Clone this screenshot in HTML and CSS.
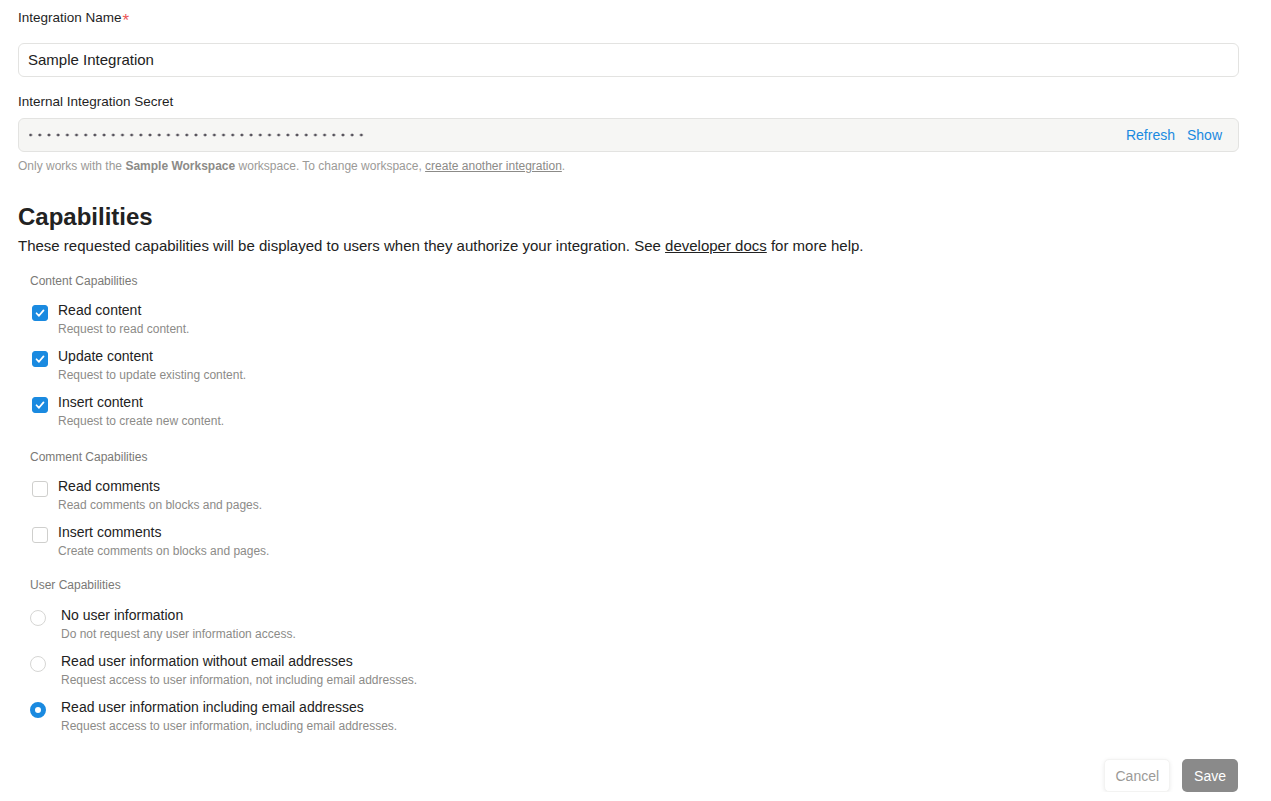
FILE: index.html
```html
<!DOCTYPE html>
<html lang="en">
<head>
<meta charset="utf-8">
<title>Integration settings</title>
<link rel="stylesheet" href="styles.css">
</head>
<body>
<main class="page">
  <section class="field">
    <label class="field-label">Integration Name<span class="req">*</span></label>
    <div class="input">Sample Integration</div>
  </section>

  <section class="field secret-field">
    <label class="field-label">Internal Integration Secret</label>
    <div class="input secret">
      <span class="mask" aria-label="hidden secret"></span>
      <span class="secret-actions">
        <a class="action">Refresh</a>
        <a class="action">Show</a>
      </span>
    </div>
    <p class="hint">Only works with the <b>Sample Workspace</b> workspace. To change workspace, <a class="hint-link">create another integration</a>.</p>
  </section>

  <section class="caps">
    <h2 class="caps-title">Capabilities</h2>
    <p class="caps-desc">These requested capabilities will be displayed to users when they authorize your integration. See <a class="doc-link">developer docs</a> for more help.</p>

    <div class="group">
      <h3 class="group-title">Content Capabilities</h3>
      <div class="option">
        <span class="box checked"><svg viewBox="0 0 16 16"><path d="M4 8.3 L6.8 11.2 L12 5" /></svg></span>
        <div class="opt-text"><div class="opt-name">Read content</div><div class="opt-sub">Request to read content.</div></div>
      </div>
      <div class="option">
        <span class="box checked"><svg viewBox="0 0 16 16"><path d="M4 8.3 L6.8 11.2 L12 5" /></svg></span>
        <div class="opt-text"><div class="opt-name">Update content</div><div class="opt-sub">Request to update existing content.</div></div>
      </div>
      <div class="option">
        <span class="box checked"><svg viewBox="0 0 16 16"><path d="M4 8.3 L6.8 11.2 L12 5" /></svg></span>
        <div class="opt-text"><div class="opt-name">Insert content</div><div class="opt-sub">Request to create new content.</div></div>
      </div>
    </div>

    <div class="group">
      <h3 class="group-title">Comment Capabilities</h3>
      <div class="option">
        <span class="box"></span>
        <div class="opt-text"><div class="opt-name">Read comments</div><div class="opt-sub">Read comments on blocks and pages.</div></div>
      </div>
      <div class="option">
        <span class="box"></span>
        <div class="opt-text"><div class="opt-name">Insert comments</div><div class="opt-sub">Create comments on blocks and pages.</div></div>
      </div>
    </div>

    <div class="group radio-group">
      <h3 class="group-title">User Capabilities</h3>
      <div class="option radio-opt">
        <span class="radio"></span>
        <div class="opt-text"><div class="opt-name">No user information</div><div class="opt-sub">Do not request any user information access.</div></div>
      </div>
      <div class="option radio-opt">
        <span class="radio"></span>
        <div class="opt-text"><div class="opt-name">Read user information without email addresses</div><div class="opt-sub">Request access to user information, not including email addresses.</div></div>
      </div>
      <div class="option radio-opt">
        <span class="radio on"></span>
        <div class="opt-text"><div class="opt-name">Read user information including email addresses</div><div class="opt-sub">Request access to user information, including email addresses.</div></div>
      </div>
    </div>
  </section>

  <footer class="footer">
    <button class="btn cancel">Cancel</button>
    <button class="btn save">Save</button>
  </footer>
</main>
</body>
</html>
```

FILE: styles.css
```css
html, body {
  margin: 0;
  padding: 0;
  background: #fff;
}

body {
  font-family: "Liberation Sans", Arial, sans-serif;
  color: #37352f;
}

.page {
  width: 1221px;
  padding: 9px 0 0 18px;
}

.field-label {
  display: block;
  font-size: 13.5px;
  line-height: 17px;
  color: #1f1f1f;
}

.req {
  color: #eb5757;
  font-size: 17px;
  line-height: 10px;
  margin-left: 1px;
  position: relative;
  top: 4px;
}

.input {
  margin-top: 17px;
  height: 31px;
  border: 1px solid #e3e3e1;
  border-radius: 6px;
  display: flex;
  align-items: center;
  padding: 0 9px 1px;
  font-size: 15px;
  color: #222;
}

.secret-field {
  margin-top: 16px;
}

.secret-field .input {
  margin-top: 8px;
  height: 32px;
  padding-bottom: 0;
}

.secret {
  background: #f6f6f4;
  justify-content: space-between;
  padding: 0 16px 0 10px;
}

.mask {
  display: block;
  width: 336px;
  height: 4px;
  background-image: radial-gradient(circle, #55515a 1.2px, transparent 1.7px);
  background-size: 9.2px 4px;
  background-position: -3px 0;
}

.secret-actions {
  display: flex;
  gap: 12px;
  font-size: 14px;
}

.action {
  color: #1a8ae0;
  cursor: pointer;
}

.hint {
  margin: 6px 0 0;
  font-size: 12px;
  line-height: 16px;
  color: #9b9a97;
}

.hint b {
  font-weight: bold;
  color: #8c8b88;
}

.hint-link {
  color: #8c8b88;
  text-decoration: underline;
}

.caps {
  margin-top: 28px;
}

.caps-title {
  margin: 0;
  font-size: 24px;
  line-height: 30px;
  font-weight: bold;
  color: #222;
}

.caps-desc {
  margin: 4px 0 0;
  font-size: 15px;
  line-height: 20px;
  color: #222;
}

.doc-link {
  color: #222;
  text-decoration: underline;
}

.group {
  padding-left: 12px;
  margin-top: 17px;
}

.group + .group {
  margin-top: 15px;
}

.group + .radio-group {
  margin-top: 13px;
}

.group-title {
  margin: 0 0 7px;
  font-size: 12px;
  line-height: 16px;
  font-weight: normal;
  color: #7a7976;
}

.radio-group .group-title {
  margin-bottom: 8px;
}

.option {
  display: flex;
  align-items: flex-start;
  gap: 10px;
  height: 46px;
}

.box {
  flex: none;
  width: 14px;
  height: 14px;
  margin: 9px 0 0 2px;
  border: 1px solid #cfcfcd;
  border-radius: 3px;
  background: #fff;
}

.box.checked {
  background: #1a8ae0;
  border-color: #1a8ae0;
}

.box svg {
  display: block;
  width: 14px;
  height: 14px;
}

.box path {
  fill: none;
  stroke: #fff;
  stroke-width: 2;
  stroke-linecap: round;
  stroke-linejoin: round;
}

.opt-text {
  padding-top: 6px;
}

.opt-name {
  font-size: 14px;
  line-height: 17px;
  color: #222;
}

.opt-sub {
  margin-top: 3px;
  font-size: 12px;
  line-height: 14px;
  color: #8c8b88;
}

.radio-opt {
  gap: 15px;
}

.radio {
  flex: none;
  width: 14px;
  height: 14px;
  margin-top: 9px;
  border: 1px solid #d6d6d4;
  border-radius: 50%;
  background: #fff;
}

.radio.on {
  width: 6px;
  height: 6px;
  border: 5px solid #1a8ae0;
  background: #fff;
}

.footer {
  display: flex;
  justify-content: flex-end;
  gap: 12px;
  margin-top: 20px;
  padding-right: 1px;
}

.btn {
  font-family: "Liberation Sans", Arial, sans-serif;
  font-size: 14px;
  height: 33px;
  border-radius: 5px;
  cursor: pointer;
}

.cancel {
  background: #fff;
  color: #9b9a97;
  border: 1px solid #f3f3f2;
  box-shadow: 0 1px 4px rgba(0, 0, 0, 0.08);
  padding: 0 10px;
}

.save {
  background: #8a8a8a;
  color: #fff;
  border: none;
  padding: 0 12px;
}
```
